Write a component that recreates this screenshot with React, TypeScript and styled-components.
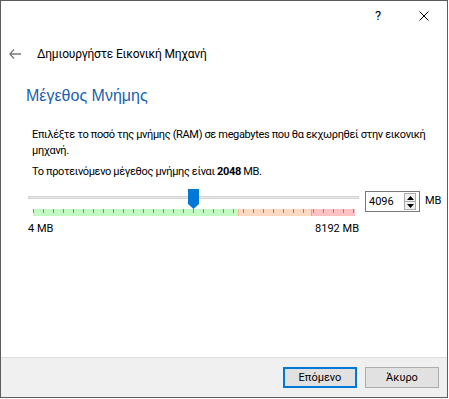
import React from 'react'
import styled, { createGlobalStyle } from 'styled-components'

const GlobalStyle = createGlobalStyle`
  html, body {
    margin: 0;
    padding: 0;
    background: #ffffff;
  }
  body {
    font-family: Roboto, "Liberation Sans", Arial, sans-serif;
    font-size: 11px;
    color: #000000;
  }
`

const Window = styled.div`
  box-sizing: border-box;
  width: 448px;
  height: 398px;
  border: 1px solid #5c5c5c;
  background: #ffffff;
  display: flex;
  flex-direction: column;
`

const TitleBar = styled.div`
  height: 29px;
  display: flex;
  justify-content: flex-end;
`

const CaptionButton = styled.div`
  width: 46px;
  height: 29px;
  display: flex;
  align-items: center;
  justify-content: center;
  color: #000;
  font-size: 13px;
`

const Header = styled.div`
  height: 48px;
  display: flex;
  align-items: center;
  padding-left: 8px;
`

const BackArrow = styled.div`
  width: 16px;
  height: 12px;
  display: flex;
  align-items: center;
  margin-right: 12px;
`

const HeaderTitle = styled.span`
  font-size: 12px;
  letter-spacing: -0.2px;
`

const Content = styled.div`
  flex: 1;
  padding: 8px 0 0 25px;
`

const Heading = styled.div`
  font-family: "Liberation Sans", Arial, sans-serif;
  color: #1c5fb0;
  font-size: 16px;
  line-height: 20px;
  margin-bottom: 21px;
`

const Body = styled.div`
  padding-left: 6px;
`

const Paragraph = styled.p`
  margin: 0 4px 5px 0;
  line-height: 16px;
  letter-spacing: -0.35px;
`

const SliderRow = styled.div`
  display: flex;
  align-items: flex-start;
  margin-top: 9px;
  margin-left: -4px;
`

const SliderColumn = styled.div`
  width: 331px;
  flex-shrink: 0;
  display: flex;
  flex-direction: column;
`

const SliderArea = styled.div`
  position: relative;
  height: 27px;
  display: flex;
  flex-direction: column;
`

const Groove = styled.div`
  margin-top: 7px;
  height: 1px;
  background: #e7e7e7;
  border: 1px solid #d6d6d6;
`

const Handle = styled.svg`
  position: absolute;
  left: 160px;
  top: 0;
`

const Band = styled.div`
  margin: auto 4px 0 5px;
  height: 7px;
  display: flex;
`

const BandPart = styled.div<{ $w: number; $bg: string; $edge?: string }>`
  width: ${({ $w }) => $w}px;
  background-color: ${({ $bg }) => $bg};
  border-left: ${({ $edge }) => ($edge ? `1px solid ${$edge}` : 'none')};
  box-sizing: border-box;
`

const Ticks = styled.div`
  position: absolute;
  left: 5px;
  bottom: 3px;
  width: 322px;
  height: 4px;
  background-image: repeating-linear-gradient(
    to right,
    #8c8c80 0px,
    #8c8c80 1px,
    transparent 1px,
    transparent 10px
  );
`

const Labels = styled.div`
  display: flex;
  justify-content: space-between;
  margin-top: 6px;
`

const SpinBox = styled.div`
  box-sizing: border-box;
  width: 55px;
  height: 21px;
  flex-shrink: 0;
  margin-left: 6px;
  margin-top: 2px;
  border: 1px solid #7a7a7a;
  display: flex;
  align-items: center;
  padding: 0 3px 0 3px;
`

const SpinValue = styled.span`
  flex: 1;
`

const SpinButtons = styled.div`
  box-sizing: border-box;
  width: 12px;
  height: 17px;
  border: 1px solid #adadad;
  background: #f0f0f0;
  display: flex;
  flex-direction: column;
`

const SpinHalf = styled.div<{ $top?: boolean }>`
  flex: 1;
  display: flex;
  align-items: center;
  justify-content: center;
  border-bottom: ${({ $top }) => ($top ? '1px solid #adadad' : 'none')};
`

const Unit = styled.span`
  margin-left: 5px;
  margin-top: 5px;
`

const Footer = styled.div`
  box-sizing: border-box;
  height: 40px;
  border-top: 1px solid #dfdfdf;
  background: #f0f0f0;
  display: flex;
  justify-content: flex-end;
  align-items: flex-start;
  gap: 8px;
  padding: 9px 8px 0 0;
`

const Button = styled.div<{ $primary?: boolean }>`
  box-sizing: border-box;
  width: 74px;
  height: 21px;
  background: #e1e1e1;
  border: ${({ $primary }) => ($primary ? '2px solid #0078d7' : '1px solid #adadad')};
  display: flex;
  align-items: center;
  justify-content: center;
`

const Triangle = ({ up }: { up?: boolean }) => (
  <svg width="7" height="4" viewBox="0 0 7 4">
    <polygon points={up ? '3.5,0 7,4 0,4' : '0,0 7,0 3.5,4'} fill="#000" />
  </svg>
)

export default function App() {
  return (
    <>
      <GlobalStyle />
      <Window>
        <TitleBar>
          <CaptionButton>?</CaptionButton>
          <CaptionButton>
            <svg width="10" height="10" viewBox="0 0 10 10">
              <path d="M0.5 0.5 L9.5 9.5 M9.5 0.5 L0.5 9.5" stroke="#000" strokeWidth="1" />
            </svg>
          </CaptionButton>
        </TitleBar>
        <Header>
          <BackArrow>
            <svg width="12" height="10" viewBox="0 0 12 10">
              <path d="M5 0.5 L0.8 5 L5 9.5 M0.8 5 L12 5" stroke="#7a7a7a" strokeWidth="1.3" fill="none" />
            </svg>
          </BackArrow>
          <HeaderTitle>Δημιουργήστε Εικονική Μηχανή</HeaderTitle>
        </Header>
        <Content>
          <Heading>Μέγεθος Μνήμης</Heading>
          <Body>
            <Paragraph>
              Επιλέξτε το ποσό της μνήμης (RAM) σε megabytes που θα εκχωρηθεί στην εικονική μηχανή.
            </Paragraph>
            <Paragraph>
              Το προτεινόμενο μέγεθος μνήμης είναι <b>2048</b> MB.
            </Paragraph>
            <SliderRow>
              <SliderColumn>
                <SliderArea>
                  <Groove />
                  <Handle width="11" height="20" viewBox="0 0 11 20">
                    <polygon points="0,0 11,0 11,15 5.5,20 0,15" fill="#0078d7" />
                  </Handle>
                  <Band>
                    <BandPart $w={205} $bg="#c3f9c3" />
                    <BandPart $w={73} $bg="#fdd9c1" $edge="#f5b898" />
                    <BandPart $w={44} $bg="#ffc1c1" $edge="#f59c9c" />
                  </Band>
                  <Ticks />
                </SliderArea>
                <Labels>
                  <span>4 MB</span>
                  <span>8192 MB</span>
                </Labels>
              </SliderColumn>
              <SpinBox>
                <SpinValue>4096</SpinValue>
                <SpinButtons>
                  <SpinHalf $top>
                    <Triangle up />
                  </SpinHalf>
                  <SpinHalf>
                    <Triangle />
                  </SpinHalf>
                </SpinButtons>
              </SpinBox>
              <Unit>MB</Unit>
            </SliderRow>
          </Body>
        </Content>
        <Footer>
          <Button $primary>Επόμενο</Button>
          <Button>Άκυρο</Button>
        </Footer>
      </Window>
    </>
  )
}
